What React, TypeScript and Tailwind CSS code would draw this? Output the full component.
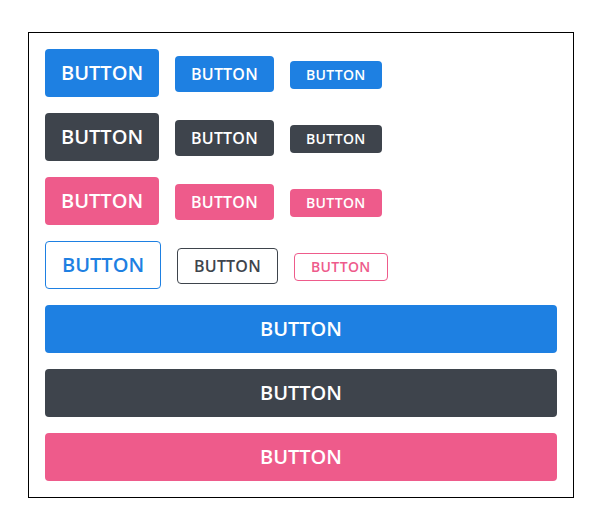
const base = "rounded font-semibold uppercase text-white flex items-center justify-center"

function Row({ color }: { color: string }) {
  return (
    <div className="flex items-baseline gap-4">
      <button className={`${base} h-12 px-4 text-[20px] ${color}`}>Button</button>
      <button className={`${base} h-9 px-4 text-[16px] tracking-[0.2px] ${color}`}>Button</button>
      <button className={`${base} h-7 px-4 text-[14px] tracking-[0.4px] ${color}`}>Button</button>
    </div>
  )
}

export default function App() {
  return (
    <div className="min-h-screen bg-white pt-8 pl-7" style={{ fontFamily: '"Open Sans", sans-serif' }}>
      <div className="w-[546px] border border-black p-4 flex flex-col gap-4">
        <Row color="bg-[#1e80e2]" />
        <Row color="bg-[#3e444c]" />
        <Row color="bg-[#ee5b8b]" />
        <div className="flex items-baseline gap-4">
          <button className={`${base} h-12 px-4 text-[20px] bg-white border border-[#1e80e2] !text-[#1e80e2]`}>Button</button>
          <button className={`${base} h-9 px-4 text-[16px] tracking-[0.2px] bg-white border border-[#3e444c] !text-[#3e444c]`}>Button</button>
          <button className={`${base} h-7 px-4 text-[14px] tracking-[0.4px] bg-white border border-[#ee5b8b] !text-[#ee5b8b]`}>Button</button>
        </div>
        <button className={`${base} h-12 w-full text-[20px] bg-[#1e80e2]`}>Button</button>
        <button className={`${base} h-12 w-full text-[20px] bg-[#3e444c]`}>Button</button>
        <button className={`${base} h-12 w-full text-[20px] bg-[#ee5b8b]`}>Button</button>
      </div>
    </div>
  )
}
